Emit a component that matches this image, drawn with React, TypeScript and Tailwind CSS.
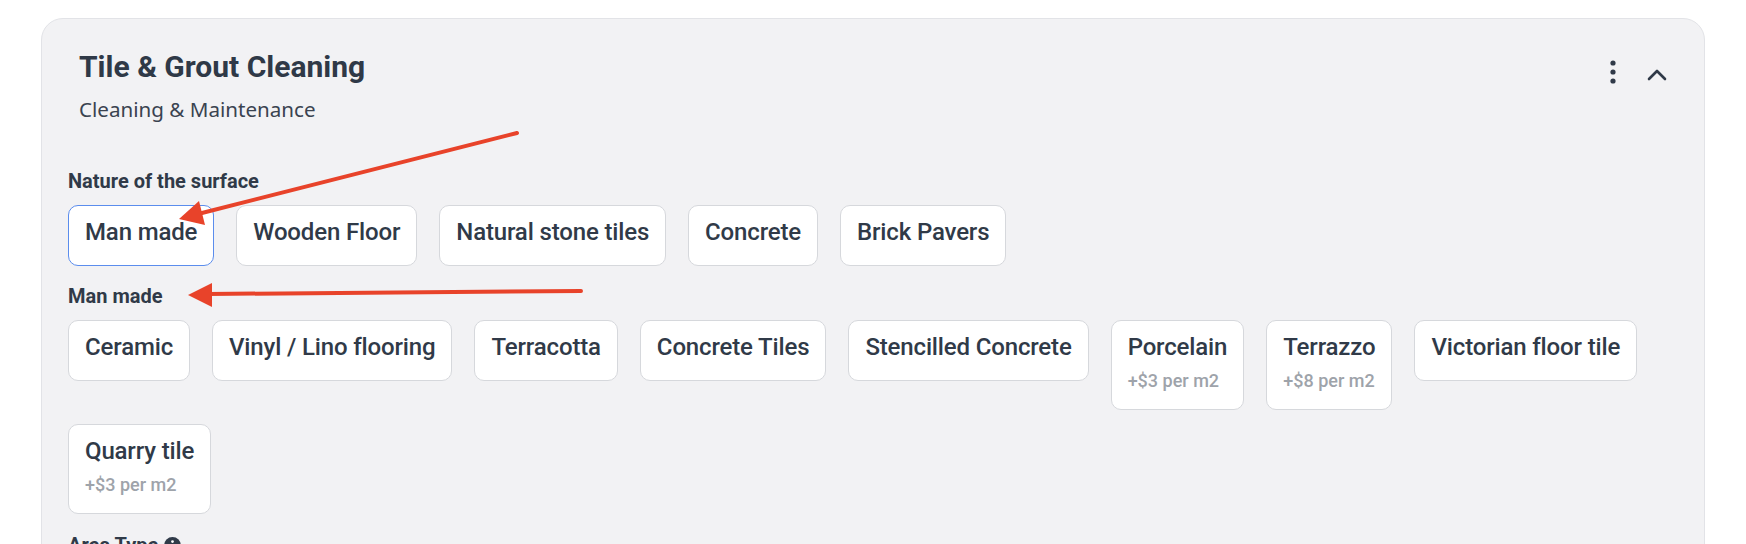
import React from 'react';

type Option = {
  label: string;
  price?: string;
  selected?: boolean;
};

const surfaces: Option[] = [
  { label: 'Man made', selected: true },
  { label: 'Wooden Floor' },
  { label: 'Natural stone tiles' },
  { label: 'Concrete' },
  { label: 'Brick Pavers' },
];

const manMade: Option[] = [
  { label: 'Ceramic' },
  { label: 'Vinyl / Lino flooring' },
  { label: 'Terracotta' },
  { label: 'Concrete Tiles' },
  { label: 'Stencilled Concrete' },
  { label: 'Porcelain', price: '+$3 per m2' },
  { label: 'Terrazzo', price: '+$8 per m2' },
  { label: 'Victorian floor tile' },
  { label: 'Quarry tile', price: '+$3 per m2' },
];

function OptionButton({ option }: { option: Option }) {
  return (
    <button
      className={`flex flex-col items-start rounded-[10px] border bg-white px-4 pt-[10px] text-left ${
        option.price ? 'pb-[14px]' : 'pb-[17px]'
      } ${option.selected ? 'border-[#5b8ded]' : 'border-[#d6d8dc]'}`}
    >
      <span className="text-[24px] leading-[32px] font-medium tracking-[-0.15px] text-[#303a48]">{option.label}</span>
      {option.price && (
        <span className="mt-1 text-[18px] leading-[28px] font-medium text-[#9ea3aa]">{option.price}</span>
      )}
    </button>
  );
}

function Section({ title, options, className = '', info = false }: { title: string; options: Option[]; className?: string; info?: boolean }) {
  return (
    <div className={className}>
      <div className="mb-[10px] flex items-center gap-[6px] text-[20px] leading-[28px] font-bold text-[#303a48]">
        {title}
        {info && (
          <svg width="17" height="17" viewBox="0 0 16 16">
            <circle cx="8" cy="8" r="8" fill="#303a48" />
            <circle cx="8" cy="4.3" r="1.3" fill="#fff" />
            <rect x="6.9" y="6.6" width="2.2" height="6" rx="0.6" fill="#fff" />
          </svg>
        )}
      </div>
      <div className="flex flex-wrap items-start gap-x-[22px] gap-y-[14px]">
        {options.map((o) => (
          <OptionButton key={o.label} option={o} />
        ))}
      </div>
    </div>
  );
}

export default function App() {
  return (
    <div className="relative min-h-screen bg-white px-[41px] pt-[18px] font-['Roboto',sans-serif]">
      <div className="rounded-[22px] border border-[#e2e3e7] bg-[#f2f2f4] pr-[25px] pl-[26px] pt-[30px] pb-10">
        {/* header */}
        <div className="flex items-start justify-between pl-[11px] pr-3">
          <div>
            <h2 className="text-[30px] leading-[36px] font-bold text-[#2f3947]">Tile &amp; Grout Cleaning</h2>
            <p className="mt-[10px] font-['Noto_Sans',sans-serif] text-[20.6px] leading-[28px] text-[#3a4350]">
              Cleaning &amp; Maintenance
            </p>
          </div>
          <div className="mt-[11px] flex items-start gap-[31px]">
            <svg width="6" height="24" viewBox="0 0 6 24" className="text-[#303a48]">
              <circle cx="3" cy="3" r="2.6" fill="currentColor" />
              <circle cx="3" cy="12" r="2.6" fill="currentColor" />
              <circle cx="3" cy="21" r="2.6" fill="currentColor" />
            </svg>
            <svg width="20" height="12" viewBox="0 0 20 12" className="mt-[9px] text-[#303a48]">
              <polyline points="2,10 10,2 18,10" fill="none" stroke="currentColor" strokeWidth="2.6" strokeLinecap="round" strokeLinejoin="round" />
            </svg>
          </div>
        </div>

        <Section title="Nature of the surface" options={surfaces} className="mt-[44px]" />
        <Section title="Man made" options={manMade} className="mt-[16px]" />
        <Section title="Area Type" options={[{ label: 'Residential' }, { label: 'Commercial' }]} className="mt-[17px]" info />
      </div>

      {/* annotation arrows drawn over the screenshot */}
      <svg className="pointer-events-none absolute inset-0" width="1746" height="544" viewBox="0 0 1746 544">
        <line x1="517" y1="133" x2="198" y2="214" stroke="#e8432a" strokeWidth="4" strokeLinecap="round" />
        <polygon points="179,219 199,201 205,225" fill="#e8432a" />
        <line x1="581" y1="291" x2="208" y2="294" stroke="#e8432a" strokeWidth="4" strokeLinecap="round" />
        <polygon points="188,295 212,283 212,307" fill="#e8432a" />
      </svg>
    </div>
  );
}
